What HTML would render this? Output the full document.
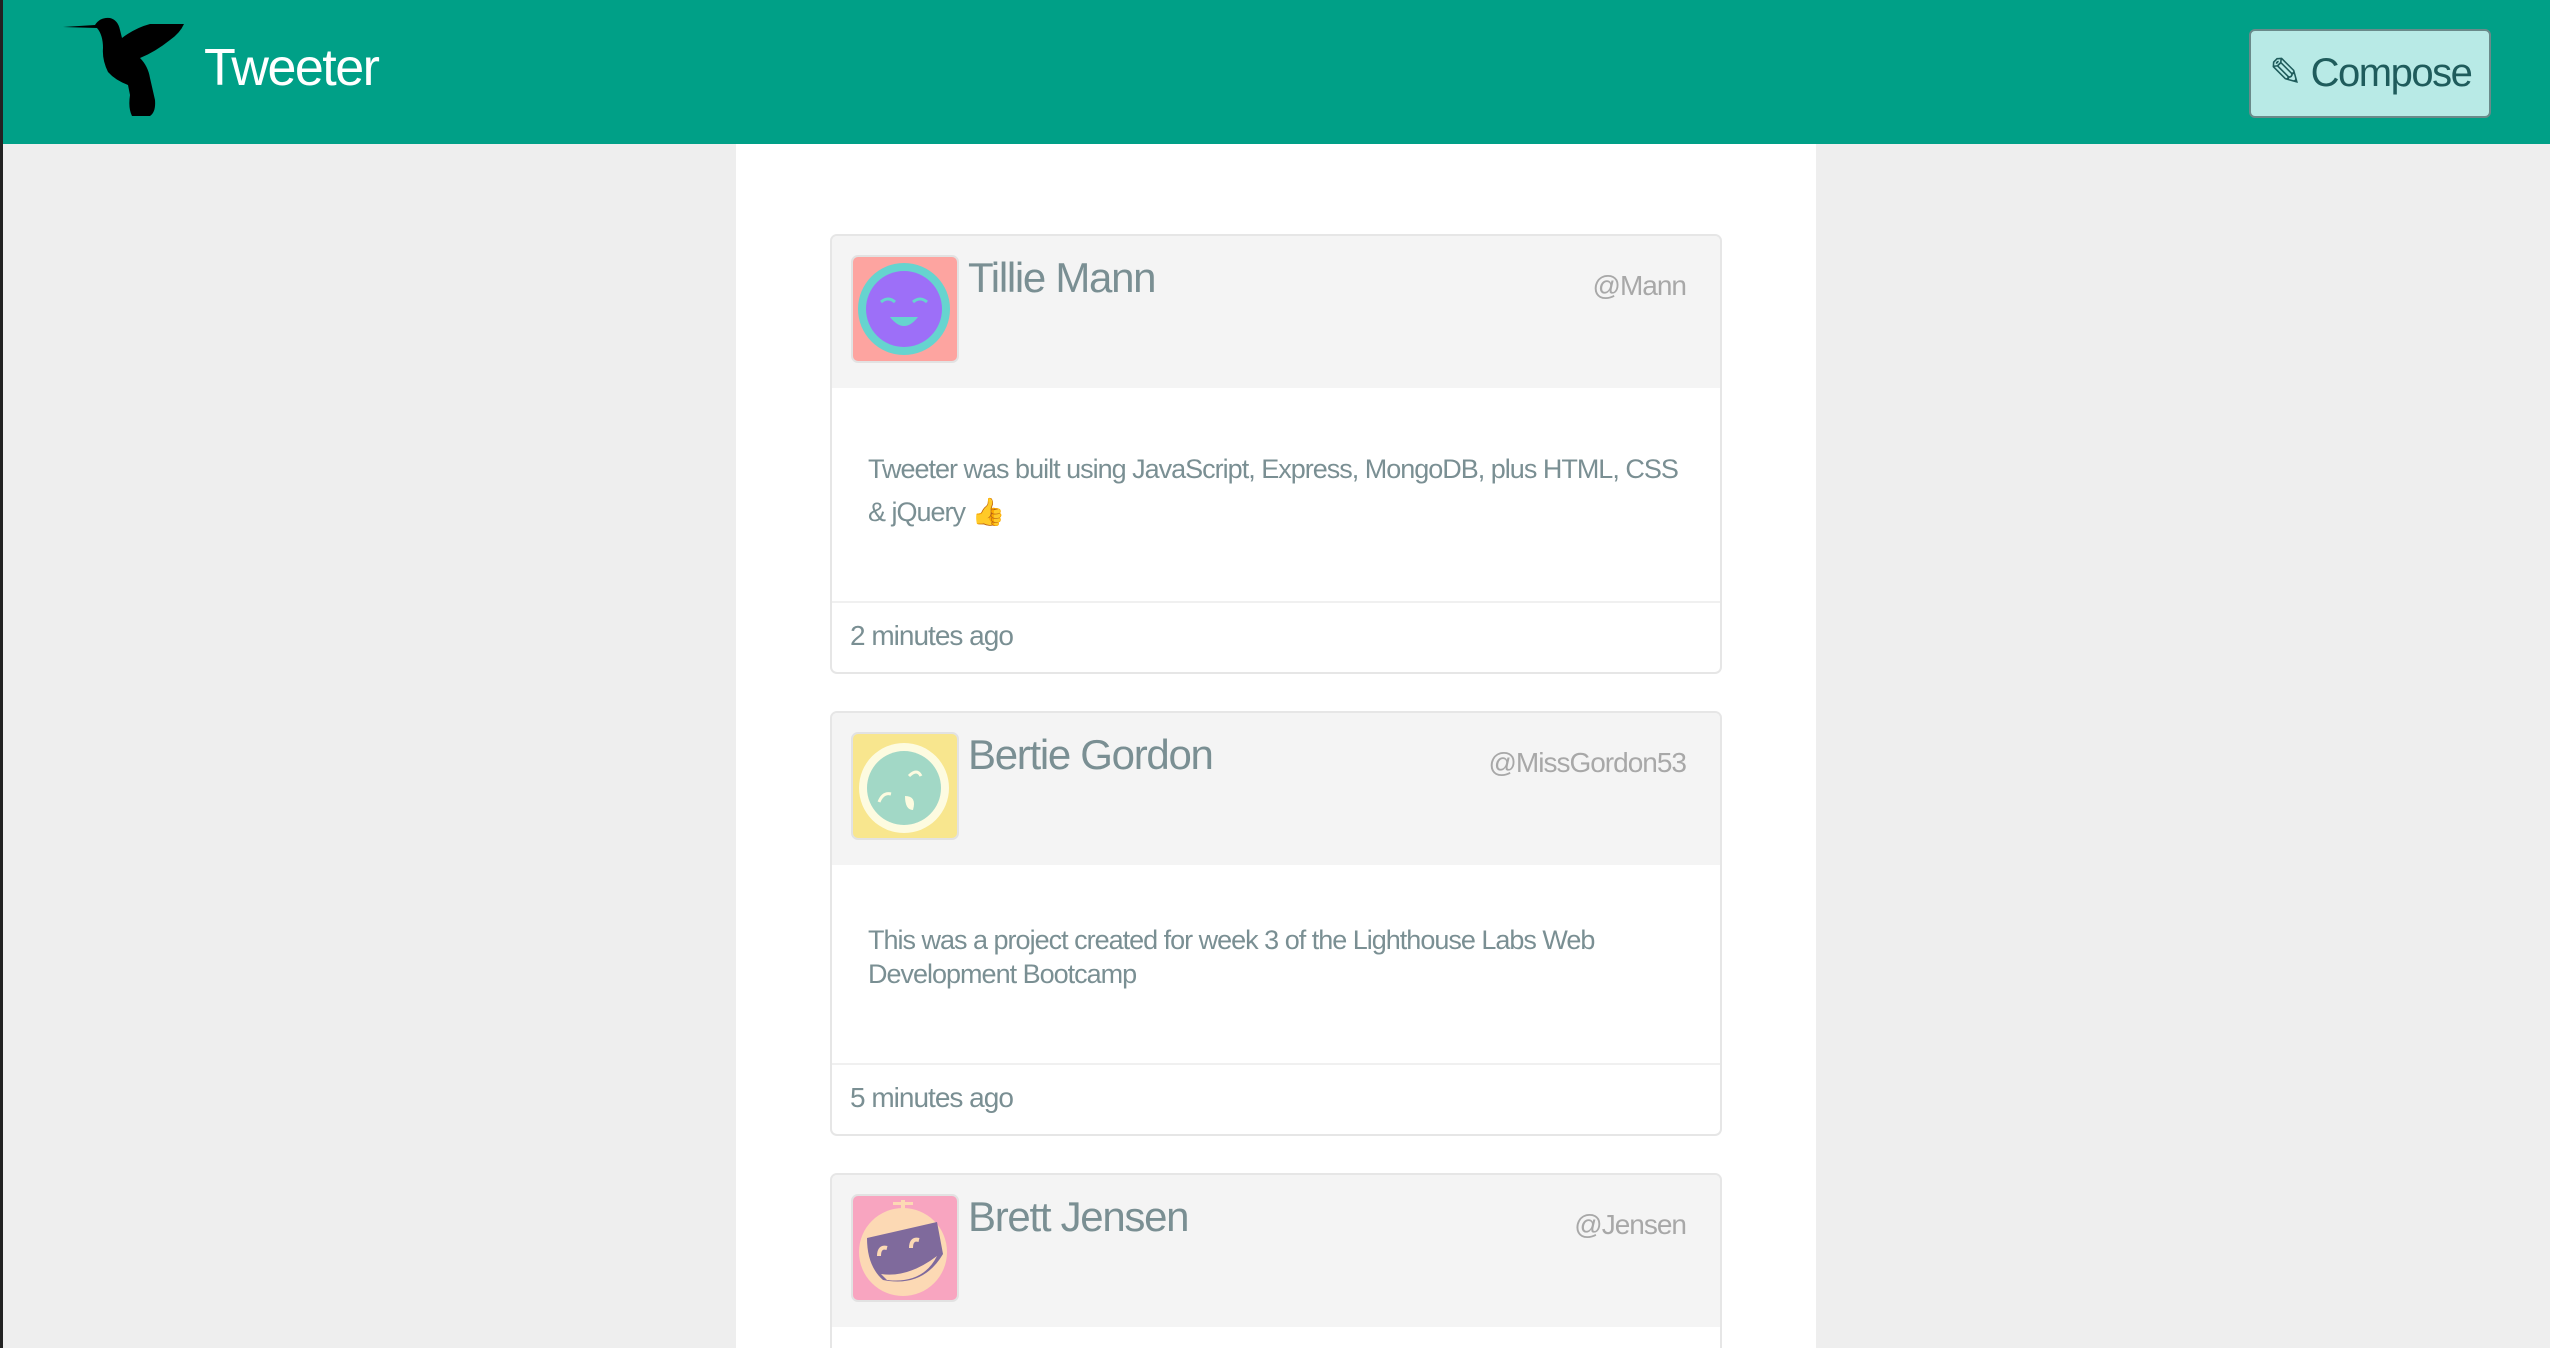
<!DOCTYPE html>
<html><head><meta charset="utf-8"><style>
*{margin:0;padding:0;box-sizing:border-box}
html,body{width:2550px;height:1348px;overflow:hidden}
body{background:#eeeeee;font-family:"Liberation Sans Narrow","Liberation Sans",sans-serif;position:relative}
.hdr{position:absolute;left:0;top:0;width:2550px;height:144px;background:#00a087}
.lb{position:absolute;left:0;top:0;width:3px;height:1348px;background:#222}
.brand{position:absolute;left:204px;top:38px;font-size:52px;color:#fff;letter-spacing:-1.5px}
.comp{position:absolute;left:2249px;top:29px;width:242px;height:89px;background:#b8eae6;border:2px solid #6a8a8a;border-radius:6px;color:#1f5c5c;font-size:40px;line-height:85px;padding-left:18px;letter-spacing:-1.5px;white-space:nowrap}
.main{position:absolute;left:736px;top:144px;width:1080px;height:1204px;background:#fff}
.card{position:absolute;left:830px;width:892px;border:2px solid #e6e6e6;border-radius:7px;overflow:hidden;background:#fff}
.ch{height:152px;background:#f4f4f4;position:relative}
.av{position:absolute;left:19px;top:19px;width:108px;height:108px;border:2px solid #e2e2e2;border-radius:7px;overflow:hidden}
.nm{position:absolute;left:136px;top:18px;font-size:42px;color:#7a8f93;letter-spacing:-1.3px;white-space:nowrap}
.hd{position:absolute;right:34px;top:34px;font-size:28px;color:#a8a8a8;letter-spacing:-1px;white-space:nowrap}
.bd{position:relative;color:#7a8f93;font-size:27px;padding-left:36px;letter-spacing:-1px;white-space:nowrap}
.ft{border-top:2px solid #f0f0f0;height:70px;color:#7a8f93;font-size:28px;padding-left:18px;line-height:66px;letter-spacing:-1px}
</style></head><body>
<div class="hdr"></div>
<div class="lb"></div>
<svg style="position:absolute;left:0;top:0" width="200" height="144"><path fill="#000" d="M63 27 L95 25 Q100 17 110 18 Q118 20 120 30 L122 38 Q135 28 150 24 L184 24 Q180 33 170 40 Q155 52 140 58 Q148 66 150 78 L155 100 Q156 112 150 116 L132 116 Q128 108 130 95 L128 85 Q115 80 108 72 Q102 60 103 48 Q103 35 97 28 Z"/></svg>
<div class="brand">Tweeter</div>
<div class="comp">✎ Compose</div>
<div class="main"></div>

<div class="card" style="top:234px;height:440px">
 <div class="ch">
  <div class="av" style="background:#fda4a0"><svg width="104" height="104"><circle cx="51" cy="52" r="46" fill="#66d4cf"/><circle cx="51" cy="52" r="38" fill="#9d6ff8"/><path d="M28 45 q7-6 14 0 M60 45 q7-6 14 0" stroke="#66d4cf" stroke-width="3" fill="none"/><path d="M37 60 q14 18 28 0 z" fill="#66d4cf"/></svg></div>
  <div class="nm">Tillie Mann</div><div class="hd">@Mann</div>
 </div>
 <div class="bd" style="height:213px;padding-top:60px;line-height:43px">Tweeter was built using JavaScript, Express, MongoDB, plus HTML, CSS<br>&amp; jQuery 👍</div>
 <div class="ft">2 minutes ago</div>
</div>

<div class="card" style="top:711px;height:425px">
 <div class="ch">
  <div class="av" style="background:#f8e68e"><svg width="104" height="104"><circle cx="51" cy="54" r="45" fill="#fdfbe0"/><circle cx="51" cy="54" r="37" fill="#a2d8c6"/><path d="M56 42 q8-8 12 0 M26 68 q4-10 12-8" stroke="#fdfbe0" stroke-width="3" fill="none"/><path d="M52 62 q12 0 8 14 q-8 0-8-14z" fill="#fdfbe0"/></svg></div>
  <div class="nm">Bertie Gordon</div><div class="hd">@MissGordon53</div>
 </div>
 <div class="bd" style="height:198px;padding-top:58px;line-height:34px">This was a project created for week 3 of the Lighthouse Labs Web<br>Development Bootcamp</div>
 <div class="ft">5 minutes ago</div>
</div>

<div class="card" style="top:1173px;height:200px">
 <div class="ch">
  <div class="av" style="background:#f8a5c0"><svg width="104" height="104"><rect x="48" y="4" width="4" height="10" fill="#fcd9b4"/><rect x="40" y="6" width="20" height="3" fill="#fcd9b4"/><circle cx="50" cy="56" r="44" fill="#fcd9b4"/><path d="M14 42 L84 26 L90 58 Q70 92 30 84 Q14 70 14 42z" fill="#7f6a9c"/><path d="M28 78 Q55 82 84 60 Q70 88 34 84z" fill="#fcd9b4"/><path d="M26 60 q0-10 8-8 M58 52 q0-10 8-8" stroke="#fcd9b4" stroke-width="4" fill="none"/></svg></div>
  <div class="nm">Brett Jensen</div><div class="hd">@Jensen</div>
 </div>
</div>
</body></html>
